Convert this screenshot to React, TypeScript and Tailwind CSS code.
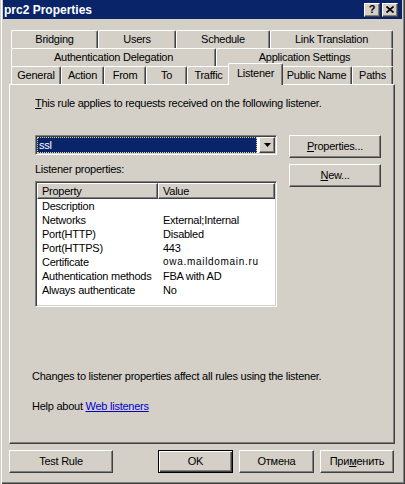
import type { ReactNode } from 'react'

// classic win2k bevels
const raised = 'border border-t-white border-l-white border-r-[#404040] border-b-[#404040] shadow-[inset_-1px_-1px_0_#808080]'
const sunken = 'border border-t-[#808080] border-l-[#808080] border-r-white border-b-white shadow-[inset_1px_1px_0_#404040,inset_-1px_-1px_0_#d4d0c8] p-[1px]'

const rowOne = [
  { label: 'Bridging', w: 'w-[87px]' },
  { label: 'Users', w: 'w-[78px]' },
  { label: 'Schedule', w: 'w-[94px]' },
  { label: 'Link Translation', w: 'w-[123px]' },
]

const rowTwo = [
  { label: 'Authentication Delegation', w: 'w-[205px]' },
  { label: 'Application Settings', w: 'w-[177px]' },
]

const rowThree = [
  { label: 'General', w: 'w-[50px]' },
  { label: 'Action', w: 'w-[43px]' },
  { label: 'From', w: 'w-[42px]' },
  { label: 'To', w: 'w-[41px]' },
  { label: 'Traffic', w: 'w-[43px]' },
  { label: 'Listener', w: 'w-[55px]', active: true },
  { label: 'Public Name', w: 'w-[71px]' },
  { label: 'Paths', w: 'w-[41px]' },
]

const props = [
  ['Description', ''],
  ['Networks', 'External;Internal'],
  ['Port(HTTP)', 'Disabled'],
  ['Port(HTTPS)', '443'],
  ['Certificate', 'owa.maildomain.ru'],
  ['Authentication methods', 'FBA with AD'],
  ['Always authenticate', 'No'],
]

function Tab({ label, w, active }: { label: string; w: string; active?: boolean }) {
  if (active) {
    return (
      <div className={`${w} -mx-[2px] -mb-[1px] h-[22px] relative z-10 bg-[#d4d0c8] flex items-center justify-center pb-[2px] rounded-t-[2px] border-t border-l border-r border-t-white border-l-white border-r-[#404040] shadow-[inset_-1px_0_0_#808080]`}>
        {label}
      </div>
    )
  }
  return (
    <div className={`${w} h-[18px] shrink-0 flex items-center justify-center rounded-t-[2px] border-t border-l border-r border-t-white border-l-white border-r-[#404040] shadow-[inset_-1px_0_0_#808080]`}>
      {label}
    </div>
  )
}

function Button({ children, className = '', isDefault }: { children: ReactNode; className?: string; isDefault?: boolean }) {
  const bevel = isDefault
    ? 'border border-black shadow-[inset_1px_1px_0_#ffffff,inset_-1px_-1px_0_#404040,inset_-2px_-2px_0_#808080]'
    : raised
  return (
    <div className={`${bevel} h-[23px] flex items-center justify-center bg-[#d4d0c8] ${className}`}>
      {children}
    </div>
  )
}

export default function App() {
  return (
    <div className="w-[405px] h-[484px] bg-[#d4d0c8] overflow-hidden text-[11px] tracking-[-0.25px] text-black font-['Liberation_Sans',Arial,sans-serif] shadow-[inset_1px_0_0_#d4d0c8,inset_2px_0_0_#ffffff,inset_-1px_-1px_0_#404040,inset_-2px_-2px_0_#808080] pt-0">
      {/* title bar */}
      <div className="mx-[3px] h-[19px] bg-[#0a246a] flex items-center justify-between pl-[1px] pr-[4px]">
        <span className="text-white font-bold text-[12px] tracking-normal">prc2 Properties</span>
        <div className="flex gap-[2px]">
          <div className={`${raised} w-[16px] h-[14px] bg-[#d4d0c8] flex items-center justify-center font-bold text-[11px] leading-none tracking-normal`}>?</div>
          <div className={`${raised} w-[16px] h-[14px] bg-[#d4d0c8] flex items-center justify-center`}>
            <svg width="8" height="7" viewBox="0 0 8 7">
              <path d="M0.5 0.5 L7.5 6.5 M7.5 0.5 L0.5 6.5" stroke="black" strokeWidth="1.7" />
            </svg>
          </div>
        </div>
      </div>

      {/* tabs */}
      <div className="mt-[11px] ml-[11px] w-[382px]">
        <div className="flex">
          {rowOne.map(t => <Tab key={t.label} {...t} />)}
        </div>
        <div className="flex">
          {rowTwo.map(t => <Tab key={t.label} {...t} />)}
        </div>
        <div className="flex items-end h-[18px]">
          {rowThree.map(t => <Tab key={t.label} {...t} />)}
        </div>
      </div>

      {/* panel */}
      <div className="ml-[9px] w-[386px] h-[360px] flex flex-col border border-t-white border-l-white border-r-[#404040] border-b-[#404040] shadow-[inset_-1px_-1px_0_#808080]">
        <p className="ml-[25px] mt-[12px] leading-[13px]">
          <span className="underline">T</span>his rule applies to requests received on the following listener.
        </p>

        <div className="ml-[25px] mt-[25px] flex gap-[12px]">
          <div className="w-[242px] flex flex-col">
            <div className={`${sunken} h-[20px] bg-white flex`}>
              <div className="flex-1 mr-[2px] bg-[#0a246a] border border-dotted border-[#d8d090] text-white leading-[14px] pl-[1px]">
                ssl
              </div>
              <div className={`${raised} w-[16px] h-full bg-[#d4d0c8] flex items-center justify-center`}>
                <svg width="7" height="4" viewBox="0 0 7 4">
                  <path d="M0 0 H7 L3.5 4 Z" fill="black" />
                </svg>
              </div>
            </div>

            <p className="mt-[8px] leading-[13px]">Listener properties:</p>

            <div className={`${sunken} mt-[5px] h-[126px] bg-white flex flex-col`}>
              <div className="flex h-[16px] shrink-0">
                <div className={`${raised} w-[121px] bg-[#d4d0c8] pl-[4px] leading-[14px]`}>Property</div>
                <div className={`${raised} flex-1 bg-[#d4d0c8] pl-[4px] leading-[14px]`}>Value</div>
              </div>
              {props.map(([name, value]) => (
                <div key={name} className="flex h-[14px] leading-[14px]">
                  <div className="w-[121px] pl-[5px] whitespace-nowrap">{name}</div>
                  <div
                    className={
                      name === 'Certificate'
                        ? 'pl-[5px] text-[10px] tracking-[0.7px]'
                        : 'pl-[5px]'
                    }
                  >
                    {value}
                  </div>
                </div>
              ))}
            </div>
          </div>

          <div className="w-[92px] flex flex-col gap-[6px]">
            <Button>
              <span><span className="underline">P</span>roperties...</span>
            </Button>
            <Button>
              <span><span className="underline">N</span>ew...</span>
            </Button>
          </div>
        </div>

        <p className="ml-[22px] mt-[63px] leading-[13px]">
          Changes to listener properties affect all rules using the listener.
        </p>
        <p className="ml-[22px] mt-[17px] leading-[13px]">
          Help about <span className="text-[#0000cc] underline">Web listeners</span>
        </p>
      </div>

      {/* dialog buttons */}
      <div className="mt-[6px] ml-[9px] flex">
        <Button className="w-[104px]">Test Rule</Button>
        <Button className="w-[75px] ml-[45px]" isDefault>OK</Button>
        <Button className="w-[75px] ml-[6px]">Отмена</Button>
        <Button className="w-[74px] ml-[6px]">
          <span>При<span className="underline">м</span>енить</span>
        </Button>
      </div>
    </div>
  )
}
